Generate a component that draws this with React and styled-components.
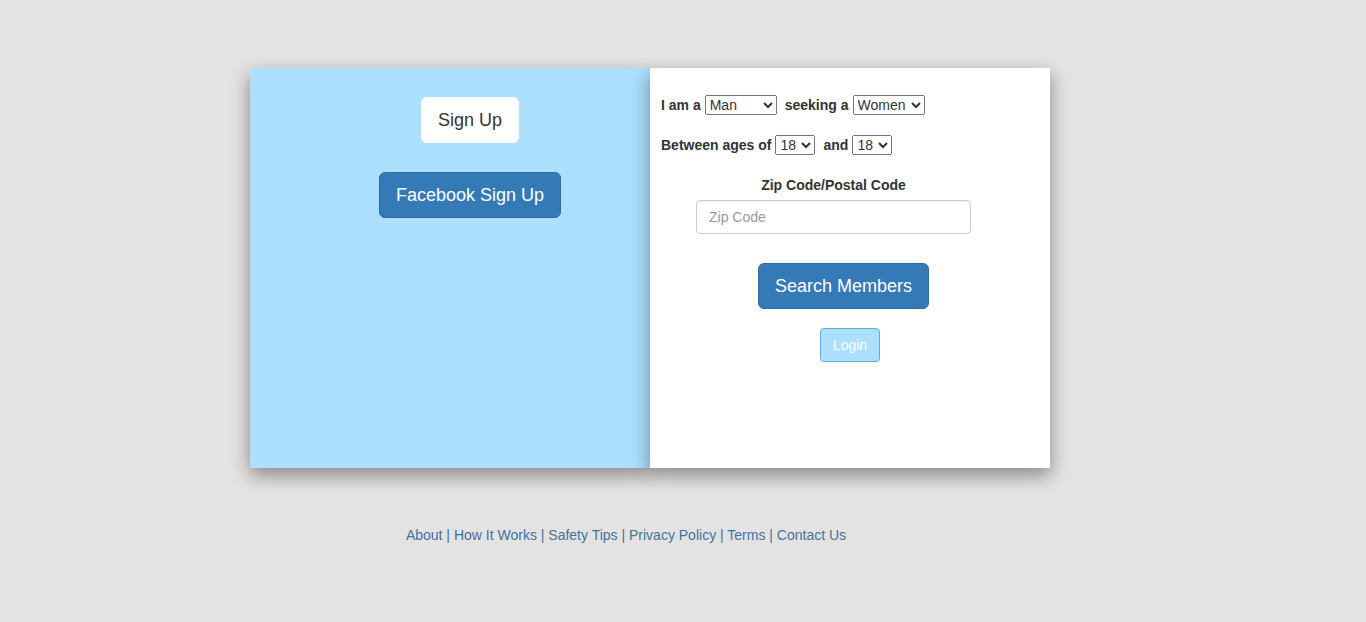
import React from "react";
import styled, { createGlobalStyle } from "styled-components";

const GlobalStyle = createGlobalStyle`
  *, *::before, *::after { box-sizing: border-box; }
  body {
    margin: 0;
    background: #e5e3e1;
    color: #333;
    font-family: "Liberation Sans", Helvetica, Arial, sans-serif;
    font-size: 14px;
    line-height: 20px;
  }
  button, input, select { font-family: inherit; }
`;

const Page = styled.main`
  padding: 68px 66px 0 0;
`;

const Card = styled.div`
  display: grid;
  grid-template-columns: 1fr 1fr;
  width: 100%;
  max-width: 800px;
  min-height: 400px;
  margin: 0 auto;
`;

const Panel = styled.section`
  background: ${(p) => p.$bg};
  box-shadow: 0 8px 16px 0 rgba(0, 0, 0, 0.24), 0 6px 20px 0 rgba(0, 0, 0, 0.19);
`;

const SignUpPanel = styled(Panel)`
  display: flex;
  flex-direction: column;
  align-items: center;
  gap: 29px;
  padding: 29px 0 0 40px;
`;

const SearchPanel = styled(Panel)`
  padding: 27px 11px 0;
`;

const Button = styled.button`
  border: 1px solid ${(p) => p.$border};
  border-radius: ${(p) => (p.$large ? 6 : 4)}px;
  padding: ${(p) => (p.$large ? "10px 16px" : "6px 12px")};
  font-size: ${(p) => (p.$large ? 18 : 14)}px;
  line-height: ${(p) => (p.$large ? 24 : 20)}px;
  background: ${(p) => p.$bg};
  color: ${(p) => p.$color || "#fff"};
  cursor: pointer;
`;

const Row = styled.div`
  display: flex;
  align-items: center;
  gap: 4px;
  margin-bottom: 20px;
  font-weight: 700;
`;

const NextLabel = styled.label`
  margin-left: 4px;
`;

const Select = styled.select`
  width: ${(p) => p.$width}px;
  height: 20px;
  font-size: 14px;
  color: #333;
`;

const ZipField = styled.div`
  display: flex;
  flex-direction: column;
  align-items: center;
  gap: 5px;
  width: 275px;
  margin: 0 auto 29px 35px;
  font-weight: 700;
`;

const TextInput = styled.input`
  width: 100%;
  height: 34px;
  padding: 6px 12px;
  border: 1px solid #ccc;
  border-radius: 4px;
  font-size: 14px;
  color: #555;
  box-shadow: inset 0 1px 1px rgba(0, 0, 0, 0.075);
  &::placeholder { color: #999; }
`;

const Actions = styled.div`
  display: flex;
  flex-direction: column;
  align-items: center;
  gap: 19px;
`;

const SearchAction = styled.div`
  padding-right: 13px;
`;

const Footer = styled.footer`
  width: 100%;
  max-width: 800px;
  margin: 0 auto;
  padding: 57px 48px 20px 0;
  text-align: center;
  color: #41719f;
  a { color: inherit; text-decoration: none; }
`;

const links = ["About", "How It Works", "Safety Tips", "Privacy Policy", "Terms", "Contact Us"];

export default function App() {
  return (
    <>
      <GlobalStyle />
      <Page>
        <Card>
          <SignUpPanel $bg="#addfff">
            <Button $large $bg="#fff" $border="#fff" $color="#333">Sign Up</Button>
            <Button $large $bg="#337ab7" $border="#2e6da4">Facebook Sign Up</Button>
          </SignUpPanel>
          <SearchPanel $bg="#fff">
            <Row>
              <label htmlFor="self">I am a</label>
              <Select id="self" $width={72}><option>Man</option><option>Woman</option></Select>
              <NextLabel htmlFor="seeking">seeking a</NextLabel>
              <Select id="seeking" $width={72}><option>Women</option><option>Men</option></Select>
            </Row>
            <Row>
              <label htmlFor="min-age">Between ages of</label>
              <Select id="min-age" $width={40}><option>18</option></Select>
              <NextLabel htmlFor="max-age">and</NextLabel>
              <Select id="max-age" $width={40}><option>18</option></Select>
            </Row>
            <ZipField>
              <label htmlFor="zip">Zip Code/Postal Code</label>
              <TextInput id="zip" type="text" placeholder="Zip Code" />
            </ZipField>
            <Actions>
              <SearchAction>
                <Button $large $bg="#337ab7" $border="#2e6da4">Search Members</Button>
              </SearchAction>
              <Button $bg="#addfff" $border="#5bb0cd">Login</Button>
            </Actions>
          </SearchPanel>
        </Card>
        <Footer>
          {links.map((name, i) => (
            <React.Fragment key={name}>
              {i > 0 && " | "}
              <a href="#">{name}</a>
            </React.Fragment>
          ))}
        </Footer>
      </Page>
    </>
  );
}
